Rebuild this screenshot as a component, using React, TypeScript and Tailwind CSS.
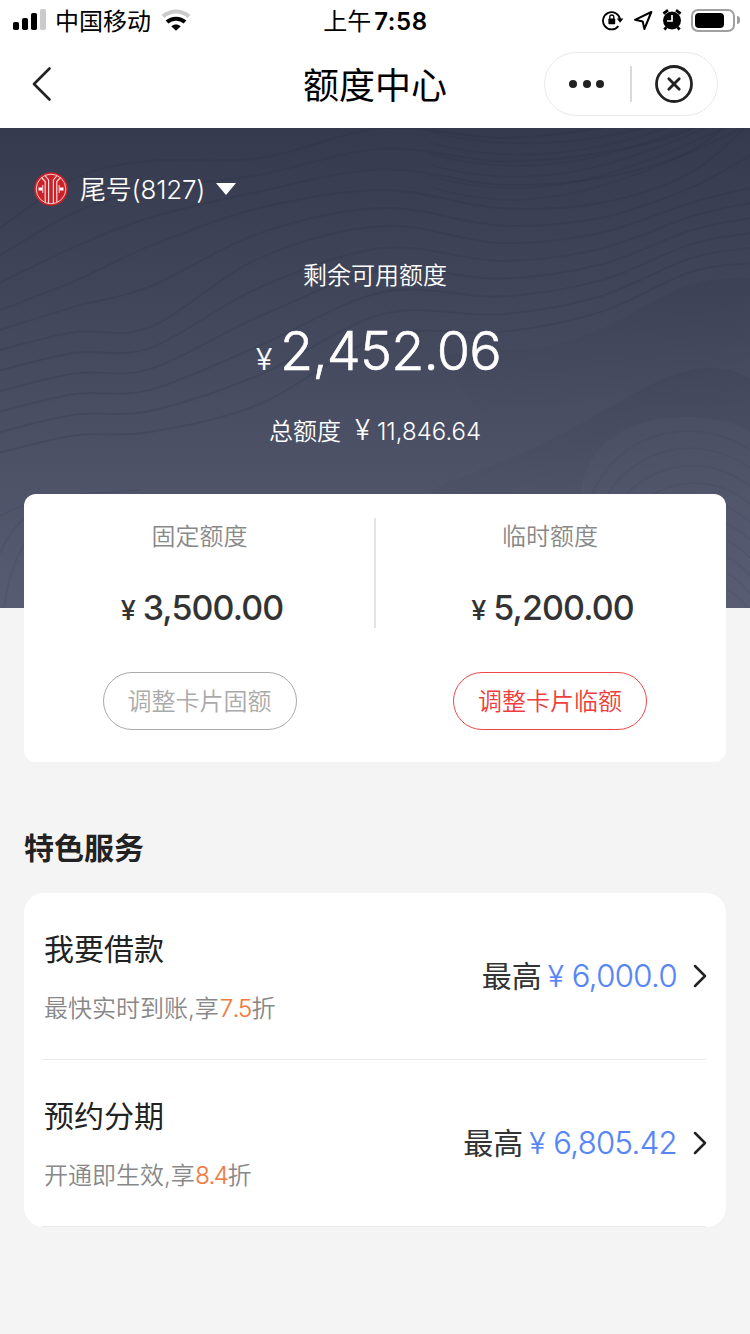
import { ChevronRight } from "lucide-react";

type QuotaColumnProps = {
  label: string;
  amount: string;
  action: string;
  disabled?: boolean;
};

type ServiceRowProps = {
  title: string;
  description: string;
  discount: string;
  amount: string;
};

const quotas: QuotaColumnProps[] = [
  { label: "固定额度", amount: "3,500.00", action: "调整卡片固额", disabled: true },
  { label: "临时额度", amount: "5,200.00", action: "调整卡片临额" }
];

const services: ServiceRowProps[] = [
  {
    title: "我要借款",
    description: "最快实时到账,享",
    discount: "7.5",
    amount: "6,000.0"
  },
  {
    title: "预约分期",
    description: "开通即生效,享",
    discount: "8.4",
    amount: "6,805.42"
  }
];

// Key contours of the hero background, the lines between them are interpolated.
const waveX = [0, 75, 150, 260, 383, 500, 600, 690, 750];
const waveKeys = [
  [100, 50, 33, 30, 0, 10, 0, -20, -60],
  [182, 153, 118, 80, 62, 80, 75, 45, -5],
  [222, 204, 199, 130, 98, 115, 105, 75, 60],
  [345, 328, 325, 305, 230, 222, 200, 158, 150]
];
const waveSteps = [3, 2, 6];

// Smooth curve through the given points.
function curve(points: number[][]) {
  let d = `M${points[0][0]} ${points[0][1]}`;

  for (let i = 0; i < points.length - 1; i += 1) {
    const p0 = points[Math.max(i - 1, 0)];
    const p1 = points[i];
    const p2 = points[i + 1];
    const p3 = points[Math.min(i + 2, points.length - 1)];
    d += `C${p1[0] + (p2[0] - p0[0]) / 6} ${p1[1] + (p2[1] - p0[1]) / 6} ${
      p2[0] - (p3[0] - p1[0]) / 6
    } ${p2[1] - (p3[1] - p1[1]) / 6} ${p2[0]} ${p2[1]}`;
  }

  return d;
}

const waveLines = waveSteps.flatMap((steps, key) =>
  Array.from({ length: steps }, (_, step) => {
    const t = step / steps;
    const from = waveKeys[key];
    const to = waveKeys[key + 1];
    return curve(waveX.map((x, i) => [x, from[i] + (to[i] - from[i]) * t]));
  })
);

function HeroWaves() {
  return (
    <svg
      className="absolute inset-0 h-full w-full"
      viewBox="0 0 750 480"
      fill="none"
      aria-hidden="true"
    >
      <defs>
        <linearGradient id="ridge" x1="0.3" y1="0" x2="0.5" y2="1">
          <stop offset="0.1" stopColor="#2b3044" stopOpacity="0.15" />
          <stop offset="0.8" stopColor="#2b3044" stopOpacity="0" />
        </linearGradient>
        <linearGradient id="mound" x1="0" y1="0" x2="0" y2="1">
          <stop offset="0" stopColor="#6b7086" stopOpacity="0.1" />
          <stop offset="1" stopColor="#6b7086" stopOpacity="0.04" />
        </linearGradient>
      </defs>
      {waveLines.map((d) => (
        <path key={d} d={d} stroke="#262b3f" strokeOpacity="0.16" strokeWidth="1.8" />
      ))}
      {[0, 1, 2, 3, 4, 5].map((i) => (
        <path
          key={i}
          d={`M430 ${4 + i * 11}C520 ${26 + i * 12} 600 ${12 + i * 12} ${660 + i * 18} -4`}
          stroke="#262b3f"
          strokeOpacity="0.12"
          strokeWidth="1.6"
        />
      ))}
      <path
        d="M750 150C700 148 672 162 630 186C585 210 555 222 500 222C480 222 465 222 440 230L500 310L750 230Z"
        fill="url(#ridge)"
      />
      <path
        d="M750 250C725 236 695 236 660 252C610 276 560 312 500 334C475 345 450 352 430 362L460 430L750 380Z"
        fill="url(#ridge)"
      />
      <path
        d="M580 372C582 335 600 312 635 297C675 284 722 286 750 304V480H580Z"
        fill="url(#mound)"
      />
      {[0, 1, 2, 3, 4, 5, 6, 7, 8, 9].map((i) => (
        <path
          key={i}
          d={`M${590 + i * 8} ${372 + i * 14}C${612 + i * 8} ${308 + i * 16} ${690 + i * 4} ${
            282 + i * 18
          } 750 ${322 + i * 18}`}
          stroke="#2f3449"
          strokeOpacity="0.11"
          strokeWidth="1.5"
        />
      ))}
      <path
        d="M0 388C40 366 80 366 140 362M0 425Q12 395 40 380M4 480Q12 420 40 400"
        stroke="#2f3449"
        strokeOpacity="0.12"
        strokeWidth="1.6"
      />
    </svg>
  );
}

function StatusBar() {
  return (
    <div className="flex h-10 items-center pr-[10px] pl-[13px] text-black">
      <div className="flex flex-1 items-center">
        <svg className="-mt-0.5" width="33" height="22" viewBox="0 0 33 22" aria-hidden="true">
          <rect x="0" y="14" width="6" height="8" rx="1.8" />
          <rect x="9" y="10" width="6" height="12" rx="1.8" />
          <rect x="18" y="5" width="6" height="17" rx="1.8" />
          <rect x="27" y="1" width="6" height="21" rx="1.8" fill="#cbcbcb" />
        </svg>
        <span className="ml-[9px] pt-[3px] text-[24px] leading-none">中国移动</span>
        <svg className="ml-[10px]" width="30" height="22" viewBox="0 0 30 22" aria-hidden="true">
          <path d="M2 7.4C9.5 0.7 20.5 0.7 28 7.4" fill="none" stroke="#cbcbcb" strokeWidth="4" />
          <path d="M6 13C11 8.6 19 8.6 24 13" fill="none" stroke="#000" strokeWidth="4" />
          <path d="M10.3 17.2C13 15 17 15 19.7 17.2L15 21.8Z" />
        </svg>
      </div>

      <div className="-ml-[2px] flex items-center gap-[3px] pt-[3px] text-[24px] leading-none">
        <span>上午</span>
        <span className="font-semibold tracking-[0.6px]">7:58</span>
      </div>

      <div className="flex flex-1 items-center justify-end">
        <svg width="22" height="22" viewBox="0 0 22 22" aria-hidden="true">
          <path
            d="M16.4 17.1A8.6 8.6 0 1 1 18.1 10.5"
            fill="none"
            stroke="#000"
            strokeWidth="1.8"
          />
          <path d="M14.8 9.6H21.4L18.1 13.8Z" />
          <rect x="6.4" y="9.5" width="6.8" height="5.7" rx="0.8" />
          <path d="M7.8 10V8A2 2 0 0 1 11.8 8V10" fill="none" stroke="#000" strokeWidth="1.3" />
        </svg>
        <svg className="ml-[9px]" width="20" height="22" viewBox="0 0 20 22" aria-hidden="true">
          <path
            d="M18.3 3L2 10.8L9.7 12.4L11.4 20Z"
            fill="none"
            stroke="#000"
            strokeWidth="2"
            strokeLinejoin="round"
          />
        </svg>
        <svg className="ml-[9px]" width="20" height="22" viewBox="0 0 20 22" aria-hidden="true">
          <circle cx="10" cy="11.5" r="9" />
          <path
            d="M1.4 4.6L6 1.2M18.6 4.6L14 1.2M4.5 18L2.4 20.7M15.5 18L17.6 20.7"
            stroke="#000"
            strokeWidth="2.8"
          />
          <path d="M10 6V12H5" fill="none" stroke="#fff" strokeWidth="1.7" />
        </svg>
        <div className="ml-[9px] h-[23px] w-[44px] rounded-[7px] border-2 border-[#a0a0a0] p-[2px]">
          <div className="h-full w-[29px] rounded-[4px] bg-black" />
        </div>
        <div className="ml-[2px] h-2 w-[3px] rounded-r-full bg-[#a0a0a0]" />
      </div>
    </div>
  );
}

function NavBar() {
  return (
    <header className="flex h-[88px] items-center px-8 text-[#222]">
      <div className="flex flex-1">
        <button type="button" aria-label="返回">
          <svg width="20" height="40" viewBox="0 0 20 40" fill="none">
            <path
              d="M17.5 4.5L2 20L17.5 35.5"
              stroke="#222"
              strokeWidth="2.6"
              strokeLinecap="round"
              strokeLinejoin="round"
            />
          </svg>
        </button>
      </div>
      <h1 className="pt-1 text-[36px] leading-none text-black">额度中心</h1>
      <div className="flex flex-1 justify-end">
        <div className="flex h-16 w-[174px] items-center rounded-full border border-[#e9e9e9]">
          <div className="flex flex-1 justify-center gap-[5.5px] pr-[2px]">
            <span className="size-2 rounded-full bg-[#222]" />
            <span className="size-2 rounded-full bg-[#222]" />
            <span className="size-2 rounded-full bg-[#222]" />
          </div>
          <span className="h-9 w-0.5 bg-[#dadada]" />
          <div className="flex w-[85px] justify-center pr-px">
            <svg width="38" height="38" viewBox="0 0 38 38" fill="none" stroke="#222">
              <circle cx="19" cy="19" r="17.5" strokeWidth="2.8" />
              <path
                d="M13.8 13.8L24.2 24.2M24.2 13.8L13.8 24.2"
                strokeWidth="2.8"
                strokeLinecap="round"
              />
            </svg>
          </div>
        </div>
      </div>
    </header>
  );
}

function BankLogo() {
  return (
    <svg width="34" height="34" viewBox="0 0 34 34" fill="none" aria-hidden="true">
      <circle cx="17" cy="17" r="16.8" fill="#cb2128" />
      <circle cx="17" cy="17" r="14.8" stroke="#f3c9ca" strokeWidth="1" />
      <g stroke="#f7dcdc" strokeWidth="1.2">
        <path d="M7.5 5.5L11.2 9.5V30.5M26.5 5.5L22.8 9.5V30.5" />
        <path d="M11 3.5L14.6 8V31.5M23 3.5L19.4 8V31.5" />
      </g>
      <path d="M4.5 17H8.5M25.5 17H29.5" stroke="#fff" strokeWidth="3.2" />
      <path d="M8.8 13V21M25.2 13V21" stroke="#f7dcdc" strokeWidth="1" />
    </svg>
  );
}

function QuotaColumn({ label, amount, action, disabled }: QuotaColumnProps) {
  return (
    <div className="flex w-[350px] flex-col items-center first:w-[351px]">
      <p className="mt-[31px] text-[24px] leading-6 font-[350] text-[#888]">{label}</p>
      <p className="mt-[39px] flex items-baseline pl-[5px] text-[#333]">
        <span className="w-[22px] text-[27px] leading-10 font-medium">¥</span>
        <span className="text-[34px] leading-10 font-medium tracking-[-0.9px]">{amount}</span>
      </p>
      <button
        type="button"
        disabled={disabled}
        className={`mt-[41px] flex h-[58px] w-[194px] items-center justify-center rounded-full border pt-px text-[24px] font-[350] ${
          disabled ? "border-[#aaa] text-[#aaa]" : "border-[#f04848] text-[#f03c3c]"
        }`}
      >
        {action}
      </button>
    </div>
  );
}

function ServiceRow({ title, description, discount, amount }: ServiceRowProps) {
  return (
    <div className="mr-5 ml-[18px] flex h-[167px] items-center justify-between border-b border-[#ebebeb] pl-0.5">
      <div>
        <h3 className="pt-0.5 text-[30px] leading-[30px] text-[#222]">{title}</h3>
        <p className="mt-[33px] text-[24px] leading-6 font-[350] text-[#888]">
          {description}
          <span className="tracking-[-1.6px] text-[#f17a3e] tabular-nums [-webkit-text-stroke:0.2px]">
            {discount}
          </span>
          折
        </p>
      </div>
      <div className="flex items-center">
        <span className="text-[30px] text-[#333]">最高</span>
        <span className="ml-[6px] flex items-baseline text-[31px] font-[350] tracking-[-0.6px] text-[#5685f5] [-webkit-text-stroke:0.2px]">
          <span className="w-[24px] text-[30px]">¥</span>
          {amount}
        </span>
        <ChevronRight className="-mr-[14px] ml-[3px] size-10 text-[#222]" strokeWidth={1.5} />
      </div>
    </div>
  );
}

export default function App() {
  return (
    <div className="min-h-[1334px] w-[750px] bg-[#f4f4f4] font-['Inter','Noto_Sans_CJK_SC',sans-serif]">
      <div className="bg-white">
        <StatusBar />
        <NavBar />
      </div>

      <section className="relative h-[480px] overflow-hidden bg-linear-to-b from-[#353a4e] to-[#575c72] text-white">
        <HeroWaves />
        <div className="relative flex flex-col items-center">
          <div className="mt-11 flex h-[34px] items-center self-start pl-[34px]">
            <BankLogo />
            <span className="ml-3 pt-px text-[26px] leading-none font-[350] tracking-[-0.2px]">
              尾号(8127)
            </span>
            <span className="ml-[11px] h-0 w-0 border-x-[10px] border-t-[12px] border-x-transparent border-t-white" />
          </div>
          <p className="mt-[58px] text-[24px] leading-6 font-[350]">剩余可用额度</p>
          <p className="mt-[33px] flex items-baseline pl-[7px] leading-[60px]">
            <span className="w-[24px] text-[30px] font-[350] [-webkit-text-stroke:0.2px]">¥</span>
            <span className="text-[54px] font-[350] tracking-[-0.8px] [-webkit-text-stroke:0.6px]">
              2,452.06
            </span>
          </p>
          <p className="mt-[29px] flex items-baseline leading-6 font-[350]">
            <span className="text-[24px]">总额度</span>
            <span className="ml-[14px] w-[22px] text-[28px]">¥</span>
            <span className="text-[24px]">11,846.64</span>
          </p>
        </div>
      </section>

      <main className="relative -mt-[114px] px-6">
        <section className="relative flex h-[268px] rounded-[12px] bg-white">
          {quotas.map((quota) => (
            <QuotaColumn key={quota.label} {...quota} />
          ))}
          <span className="absolute top-6 left-[350px] h-[110px] w-0.5 bg-[#e4e4e6]" />
        </section>

        <h2 className="mt-[71px] text-[30px] leading-[30px] font-semibold text-[#222]">特色服务</h2>

        <section className="mt-[30px] overflow-hidden rounded-[20px] bg-white">
          {services.map((service) => (
            <ServiceRow key={service.title} {...service} />
          ))}
        </section>
      </main>
    </div>
  );
}
